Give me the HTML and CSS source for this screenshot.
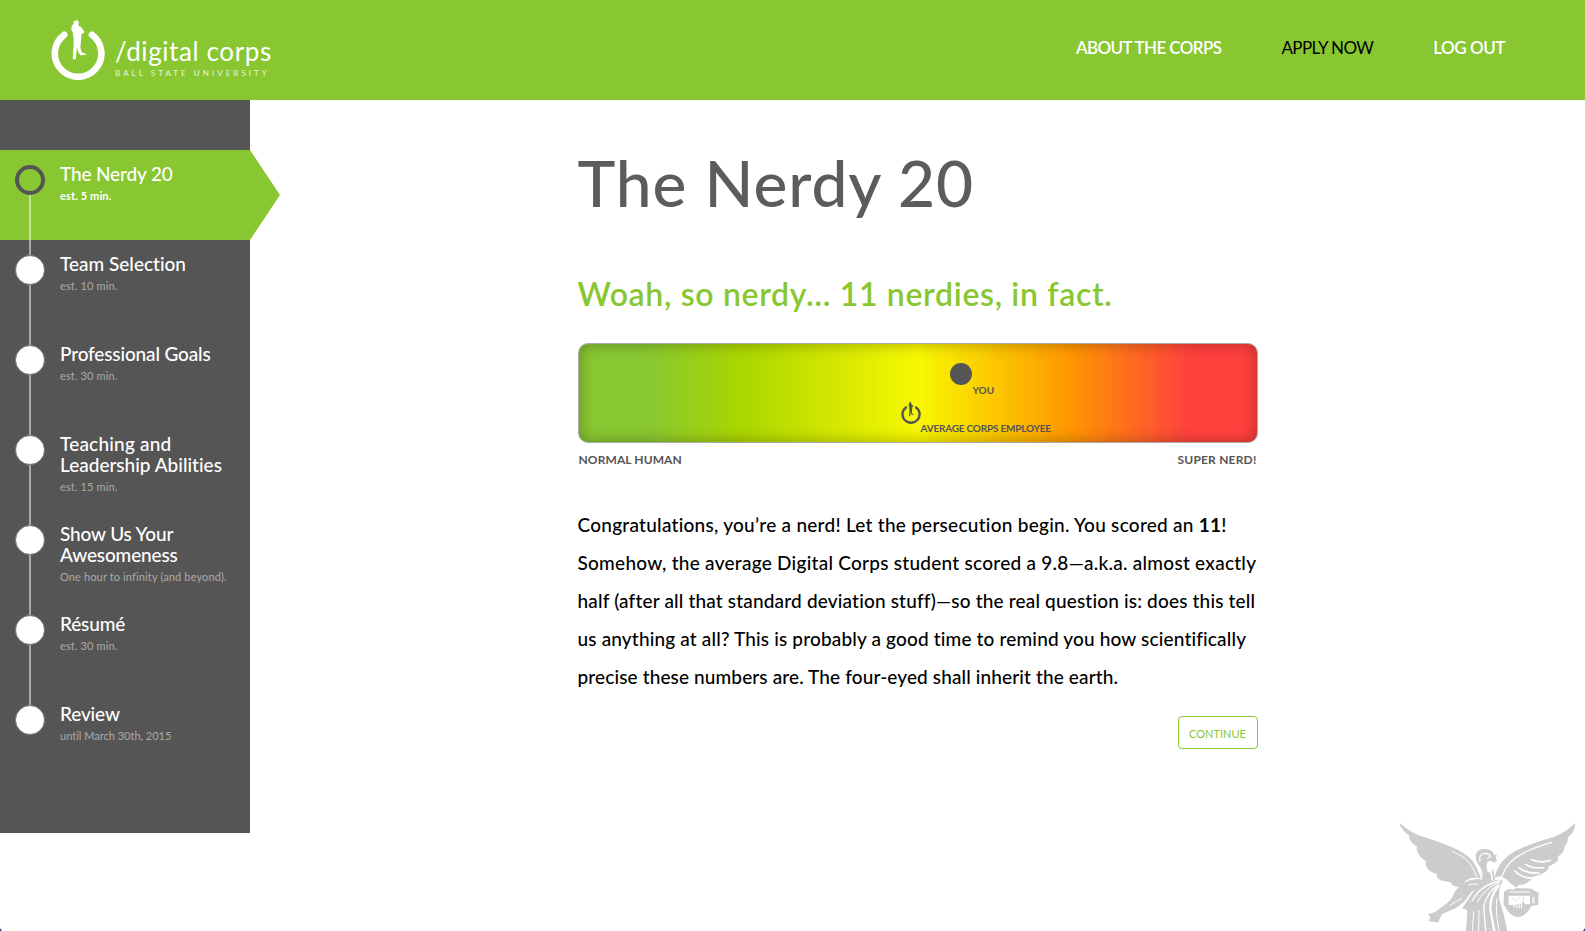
FILE: index.html
```html
<!DOCTYPE html>
<html lang="en">
<head>
<meta charset="utf-8">
<title>The Nerdy 20</title>
<link rel="stylesheet" href="styles.css">
</head>
<body>
<svg width="0" height="0" class="defs">
  <symbol id="power" viewBox="0 0 54 60">
    <path d="M13.2 14.8A23.3 23.3 0 1 0 41 14.8" fill="none" stroke="currentColor" stroke-width="6.6" stroke-linecap="round"/>
    <path d="M24 1q1.700-1.600 3.400 0l.3 3-.5 1.500 3 1.500 3.300 5-1.500 1.500-1.500.5-.5 7-.6 7 1.500 4.500 3.700 1v1.500l-5.300.2-2-3-1.500-5-1 12h-2.700l-.3-2 .7-10 .2-8-1-7-1.500-3 .8-4 2-1.500-1-2Z" fill="currentColor"/>
  </symbol>
</svg>
<header class="topbar">
  <a class="brand">
    <svg class="brand-mark"><use href="#power"/></svg>
    <span class="brand-text">
      <span class="brand-name">/digital corps</span>
      <span class="brand-sub">BALL STATE UNIVERSITY</span>
    </span>
  </a>
  <nav class="nav">
    <a class="nav-about">ABOUT THE CORPS</a>
    <a class="nav-apply">APPLY NOW</a>
    <a class="nav-logout">LOG OUT</a>
  </nav>
</header>
<div class="page">
  <aside class="sidebar">
    <ol class="steps">
      <li class="step active"><i class="dot"></i><div><h3>The Nerdy 20</h3><p>est. 5 min.</p></div></li>
      <li class="step"><i class="dot"></i><div><h3 class="even">Team Selection</h3><p>est. 10 min.</p></div></li>
      <li class="step"><i class="dot"></i><div><h3>Professional Goals</h3><p>est. 30 min.</p></div></li>
      <li class="step"><i class="dot"></i><div><h3 class="even"><span class="wide">Teaching and</span><br>Leadership Abilities</h3><p>est. 15 min.</p></div></li>
      <li class="step"><i class="dot"></i><div><h3>Show Us Your<br>Awesomeness</h3><p>One hour to infinity (and beyond).</p></div></li>
      <li class="step"><i class="dot"></i><div><h3>Résumé</h3><p>est. 30 min.</p></div></li>
      <li class="step"><i class="dot"></i><div><h3>Review</h3><p class="until">until March 30th, 2015</p></div></li>
    </ol>
  </aside>
  <main class="content">
    <h1>The Nerdy 20</h1>
    <h2>Woah, so nerdy… 11 nerdies, in fact.</h2>
    <div class="meter">
      <span class="you"></span><span class="you-label">YOU</span>
      <svg class="avg"><use href="#power"/></svg><span class="avg-label">AVERAGE CORPS EMPLOYEE</span>
    </div>
    <div class="scale"><span>NORMAL HUMAN</span><span class="scale-max">SUPER NERD!</span></div>
    <p class="result"><span class="l1">Congratulations, you’re a nerd! Let the persecution begin. You scored an <b>11</b>!</span><br><span class="l2">Somehow, the average Digital Corps student scored a 9.8—a.k.a. almost exactly</span><br><span class="l3">half (after all that standard deviation stuff)—so the real question is: does this tell</span><br><span class="l4">us anything at all? This is probably a good time to remind you how scientifically</span><br><span class="l5">precise these numbers are. The four-eyed shall inherit the earth.</span></p>
    <a class="continue">CONTINUE</a>
  </main>
</div>
<svg class="beneficence" viewBox="0 0 600 360">
  <g fill="#ccc">
    <path d="M46 37Q70 62 110 76Q180 98 215 115Q262 138 275 170L288 202L262 200Q240 204 230 227Q212 230 198 220Q204 214 188 212Q168 210 160 203Q150 192 158 190Q135 184 126 170Q118 156 124 152Q105 140 99 126Q92 112 97 108Q80 98 76 88Q70 78 74 75Q58 64 45 44Z"/>
    <path d="M570 37Q546 62 506 78Q440 96 395 118Q350 142 336 178L328 200L345 196L362 203Q378 220 396 230L400 222Q420 222 430 212Q444 204 442 198Q470 190 482 182Q494 172 490 167Q512 158 518 148L520 136Q538 124 538 108Q552 90 548 80Q566 66 570 44Z"/>
    <path d="M272 142Q270 120 290 115Q312 111 324 124L327 131L336 132L332 140L336 148L328 155L318 149L308 152L304 164L307 182L318 186L324 174L330 206L284 222L290 196L288 172L278 158Z"/>
    <path d="M290 204Q250 204 232 220Q214 232 206 250Q200 266 182 280L150 303L129 310L136 318L131 331L160 334L170 310L214 290Q240 274 250 254Q264 232 310 220Z"/>
    <path d="M352 206Q290 208 264 244Q242 276 231 293Q248 292 247 304L243 360H367Q358 310 342 262Q340 230 352 214Z"/>
    <path d="M357 242L372 234L390 236L390 231L440 233L461 247L459 282L438 286Q428 310 404 318Q380 318 368 300L356 280Z"/>
  </g>
  <g fill="none" stroke="#fff" stroke-linecap="round">
    <path d="M202 121Q250 140 266 176L276 200" stroke-width="3"/>
    <path d="M276 160L292 184L289 206" stroke-width="3"/>
    <path d="M500 94Q414 118 378 152Q356 176 350 200" stroke-width="4"/>
    <path d="M440 146Q470 158 496 148" stroke-width="5"/>
    <path d="M422 160Q442 174 476 170" stroke-width="5"/>
    <path d="M402 170Q424 188 462 186" stroke-width="5"/>
    <path d="M390 180Q408 200 442 202" stroke-width="5"/>
    <path d="M250 222Q264 216 278 220M230 262Q214 272 196 282" stroke-width="3"/>
    <path d="M345 210Q290 220 262 268" stroke-width="4"/>
    <path d="M343 214Q300 230 276 274" stroke-width="3"/>
    <path d="M343 219Q308 240 296 286L302 360" stroke-width="4"/>
    <path d="M340 226Q314 256 316 296L328 360" stroke-width="7"/>
    <path d="M336 262Q330 296 342 358" stroke-width="3"/>
    <path d="M266 302L262 358M282 298L281 358" stroke-width="3"/>
    <path d="M318 184L322 206" stroke-width="5"/>
    <path d="M285 150Q280 130 300 127Q314 127 316 136L308 142" stroke-width="4"/>
    <path d="M374 243H432" stroke-width="3"/>
  </g>
  <path d="M371 254h64v26h-16v-4h-8v16h-3v-14h-4v14h-3v-14h-4v14h-3v-12h-4v8h-4v-6h-15Z" fill="#fff"/>
  <path d="M380 260h3v3h-3zM385 265h3v3h-3zM391 267h3v3h-3zM397 263h3v3h-3zM401 259h3v3h-3zM413 257h3v4h-3zM413 264h3v4h-3zM413 271h3v5h-3z" fill="#ccc"/>
  <path d="M441 258h8v20h-8z" fill="#fff" opacity=".6"/>
</svg>
<span class="corner left"></span><span class="corner right"></span>
</body>
</html>
```
FILE: styles.css
```css
* { box-sizing: border-box; margin: 0; padding: 0; }
body { height: 931px; overflow: hidden; position: relative; background: #fff; font-family: Lato, "Liberation Sans", sans-serif; font-variant-ligatures: none; color: #000; }
.defs { position: absolute; }
.topbar { height: 100px; background: #88c731; display: flex; justify-content: space-between; padding: 0 80px 0 51px; }
.brand { display: flex; color: #fff; padding-top: 20px; gap: 11px; }
.brand-mark { width: 54px; height: 60px; }
.brand-text { display: flex; flex-direction: column; padding-top: 15px; }
.brand-name { font-size: 26px; line-height: 32px; letter-spacing: .6px; margin-left: -1px; white-space: nowrap; }
.brand-sub { font-size: 8px; line-height: 12px; letter-spacing: 3.05px; margin-left: -1px; opacity: .8; white-space: nowrap; }
.nav { display: flex; gap: 60px; padding-top: 38px; font-size: 17px; line-height: 20px; color: #fff; font-weight: 600; letter-spacing: -.62px; }
.nav a { white-space: nowrap; }
.nav-apply { color: #000; font-weight: 400; }
.nav-logout { letter-spacing: -.45px; }
.page { display: flex; }
.sidebar { width: 250px; height: 733px; background: #555; padding-top: 50px; flex: none; }
.steps { list-style: none; }
.step { height: 90px; display: flex; gap: 15px; padding: 15px 0 0 15px; position: relative; color: #fff; white-space: nowrap; }
.dot { width: 30px; height: 30px; border-radius: 50%; background: #fff; border: 1px solid #777; flex: none; }
.step:not(:last-child)::before { content: ""; position: absolute; left: 29px; top: 45px; width: 2px; height: 60px; background: rgba(255,255,255,.5); z-index: 1; }
.active { background: #88c731; }
.active .dot { border: 4px solid #555; background: none; }
.active::after { content: ""; position: absolute; left: 250px; top: 0; width: 30px; height: 90px; background: #88c731; clip-path: polygon(0 0, 100% 50%, 0 100%); }
.step h3 { font-size: 19px; line-height: 21px; font-weight: 500; margin-top: -2px; letter-spacing: -.15px; }
.step h3.even { letter-spacing: 0; }
.wide { letter-spacing: .2px; }
.step p { font-size: 11px; line-height: 14px; color: #aaa; margin-top: 5px; letter-spacing: .13px; }
.step p.until { letter-spacing: 0; }
.step.active p { color: #fff; font-weight: 700; }
.content { width: 680px; margin: 0 auto; display: flex; flex-direction: column; }
h1 { font-size: 64px; line-height: 76px; margin-top: 45px; font-weight: 500; color: #5c5c5c; letter-spacing: .93px; white-space: nowrap; }
h2 { font-size: 32px; line-height: 40px; margin-top: 53px; font-weight: 600; color: #88c731; letter-spacing: .67px; white-space: nowrap; }
.meter { height: 100px; margin-top: 29px; border: 1px solid #aaa; border-radius: 10px; position: relative; color: #555; font-size: 10px; line-height: 12px; font-weight: 700;
  background: linear-gradient(to right, #88c731 10%, #abd600 24%, #f8f800 50%, #ff9900 72%, #ff413d 90%); box-shadow: inset 0 0 15px rgba(0,0,0,.3); }
.you { position: absolute; left: 371px; top: 19px; width: 22px; height: 22px; border-radius: 50%; background: #555; }
.you-label { position: absolute; left: 394px; top: 40px; }
.avg { position: absolute; left: 322px; top: 58px; width: 20px; height: 22px; }
.avg-label { position: absolute; left: 342px; top: 78px; letter-spacing: -.2px; white-space: nowrap; }
.scale { display: flex; justify-content: space-between; margin-top: 9px; padding: 0 1px; font-size: 12px; line-height: 16px; font-weight: 700; letter-spacing: .1px; color: #555; }
.scale-max { letter-spacing: .2px; }
.result { margin-top: 38px; font-size: 19px; line-height: 38px; white-space: nowrap; font-weight: 500; }
.l1, .l2 { letter-spacing: .26px; }
.l3 { letter-spacing: .17px; }
.l4 { letter-spacing: .16px; }
.l5 { letter-spacing: .12px; }
.continue { align-self: flex-end; width: 80px; height: 33px; margin-top: 20px; border: 1px solid #88c731; border-radius: 4px; color: #88c731; font-size: 11px; line-height: 34px; text-align: center; }
.beneficence { position: absolute; right: 0; bottom: 0; width: 200px; height: 120px; }
.corner { position: absolute; bottom: 0; width: 2px; height: 3px; background: #2b4a80; }
.left { left: 0; clip-path: polygon(0 0, 100% 100%, 0 100%); }
.right { right: 0; clip-path: polygon(100% 0, 100% 100%, 0 100%); }
```
